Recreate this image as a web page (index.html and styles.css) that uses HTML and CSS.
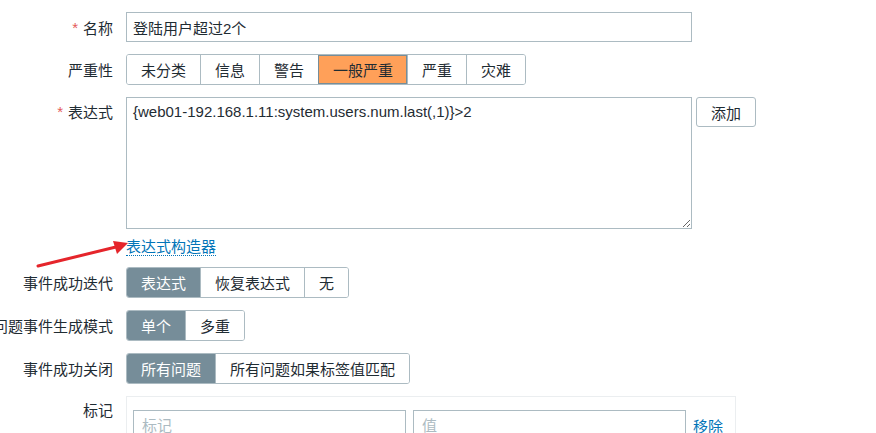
FILE: index.html
```html
<!DOCTYPE html>
<html lang="zh-CN">
<head>
    <meta charset="UTF-8">
    <title>触发器</title>
    <link rel="stylesheet" href="styles.css">
</head>
<body>
    <div class="form">
        <div class="form-row">
            <div class="form-label"><span class="required">*</span>名称</div>
            <div class="form-field">
                <input type="text" class="input-wide" value="登陆用户超过2个">
            </div>
        </div>

        <div class="form-row">
            <div class="form-label">严重性</div>
            <div class="form-field">
                <div class="radio-list">
                    <span class="radio-item">未分类</span>
                    <span class="radio-item">信息</span>
                    <span class="radio-item">警告</span>
                    <span class="radio-item sev-average">一般严重</span>
                    <span class="radio-item">严重</span>
                    <span class="radio-item">灾难</span>
                </div>
            </div>
        </div>

        <div class="form-row">
            <div class="form-label label-top"><span class="required">*</span>表达式</div>
            <div class="form-field field-row">
                <textarea class="expression">{web01-192.168.1.11:system.users.num.last(,1)}>2</textarea>
                <button class="btn-alt">添加</button>
            </div>
        </div>

        <div class="form-row row-link">
            <div class="form-label"></div>
            <div class="form-field">
                <a class="link-dotted" href="#">表达式构造器</a>
            </div>
        </div>

        <div class="form-row">
            <div class="form-label">事件成功迭代</div>
            <div class="form-field">
                <div class="radio-list">
                    <span class="radio-item selected">表达式</span>
                    <span class="radio-item">恢复表达式</span>
                    <span class="radio-item">无</span>
                </div>
            </div>
        </div>

        <div class="form-row">
            <div class="form-label">问题事件生成模式</div>
            <div class="form-field">
                <div class="radio-list">
                    <span class="radio-item selected">单个</span>
                    <span class="radio-item">多重</span>
                </div>
            </div>
        </div>

        <div class="form-row">
            <div class="form-label">事件成功关闭</div>
            <div class="form-field">
                <div class="radio-list">
                    <span class="radio-item selected">所有问题</span>
                    <span class="radio-item">所有问题如果标签值匹配</span>
                </div>
            </div>
        </div>

        <div class="form-row">
            <div class="form-label label-tags">标记</div>
            <div class="form-field">
                <div class="tags-panel">
                    <div class="tag-row">
                        <input type="text" class="input-tag" placeholder="标记">
                        <input type="text" class="input-tag" placeholder="值">
                        <a class="link-action" href="#">移除</a>
                    </div>
                </div>
            </div>
        </div>
    </div>

    <!-- annotation arrow pointing at the builder link -->
    <svg class="arrow" width="140" height="40" viewBox="0 0 140 40">
        <line x1="18" y1="36" x2="100" y2="16" stroke="#e5252b" stroke-width="3" stroke-linecap="round"/>
        <polygon points="108,13 93,11 97,24" fill="#e5252b"/>
    </svg>
</body>
</html>
```

FILE: styles.css
```css
body {
    margin: 0;
    font-family: "Liberation Sans", Arial, "Noto Sans CJK SC", sans-serif;
    font-size: 15px;
    color: #1f2c33;
    background-color: #fff;
}
.form {
    padding-top: 12px;
}
.form-row {
    display: grid;
    grid-template-columns: 113px 1fr;
    column-gap: 13px;
    margin-bottom: 12px;
}
.form-label {
    display: flex;
    justify-content: flex-end;
    align-items: center;
    height: 30px;
    white-space: nowrap;
}
.label-top {
    height: 28px;
}
.label-tags {
    height: 26px;
}
.required {
    color: #e45959;
    margin-right: 5px;
}
.form-field {
    display: flex;
}
.field-row {
    align-items: flex-start;
    gap: 4px;
}
input,
textarea,
button {
    font-family: inherit;
    font-size: 15px;
    color: #1f2c33;
}
.input-wide {
    width: 566px;
    height: 30px;
    box-sizing: border-box;
    padding: 0 6px;
    border: 1px solid #acbbc2;
    border-radius: 0;
    outline: none;
}
.expression {
    width: 566px;
    height: 132px;
    box-sizing: border-box;
    padding: 3px 6px;
    border: 1px solid #acbbc2;
    line-height: 22px;
    resize: both;
    outline: none;
}
.btn-alt {
    height: 30px;
    width: 60px;
    background-color: #fff;
    border: 1px solid #acbbc2;
    border-radius: 3px;
    padding: 0;
    cursor: pointer;
}
.radio-list {
    display: flex;
    border: 1px solid #acbbc2;
    border-radius: 3px;
    overflow: hidden;
    height: 29px;
}
.radio-item {
    display: flex;
    align-items: center;
    padding: 0 14px;
    border-left: 1px solid #acbbc2;
    background-color: #fff;
    white-space: nowrap;
}
.radio-item:first-child {
    border-left: none;
}
.radio-item.selected {
    background-color: #768d99;
    color: #fff;
    border-color: #768d99;
}
.radio-item.sev-average {
    background-color: #ffa059;
    outline: 1px solid #768d99;
    outline-offset: -1px;
}
.row-link {
    margin-top: -3px;
    margin-bottom: 11px;
}
.row-link .form-label {
    height: 18px;
}
.link-dotted {
    color: #0275b8;
    text-decoration: none;
    border-bottom: 1px dotted #0275b8;
    line-height: 17px;
}
.tags-panel {
    width: 610px;
    box-sizing: border-box;
    border: 1px solid #ebeef0;
    padding: 13px 6px 6px;
}
.tag-row {
    display: flex;
    align-items: center;
    gap: 7px;
}
.input-tag {
    width: 273px;
    height: 30px;
    box-sizing: border-box;
    padding: 0 8px;
    border: 1px solid #acbbc2;
    outline: none;
}
.input-tag::placeholder {
    color: #acbbc2;
}
.link-action {
    color: #0275b8;
    text-decoration: none;
}
.arrow {
    position: absolute;
    left: 20px;
    top: 230px;
}
```
